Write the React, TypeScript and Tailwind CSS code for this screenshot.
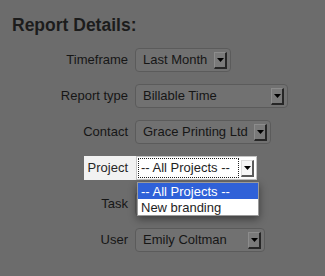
import React from "react";

const font = { fontFamily: '"Liberation Sans", Arial, sans-serif' };

function Arrow({ bright = false }: { bright?: boolean }) {
  return (
    <div
      className={
        bright
          ? "w-[13px] h-[17px] bg-[#f6f6f6] border-t border-l border-[#dcdcdc] border-r-2 border-b-2 border-r-[#5a5a5a] border-b-[#5a5a5a] flex items-center justify-center"
          : "w-[13px] h-[17px] bg-[#7a7a7a] border-t border-l border-[#8c8c8c] border-r-2 border-b-2 border-r-[#262626] border-b-[#262626] flex items-center justify-center"
      }
    >
      <svg width="7" height="4" viewBox="0 0 7 4">
        <path d="M0 0 H7 L3.5 4 Z" fill="#000" />
      </svg>
    </div>
  );
}

function Select({ text, w }: { text: string; w: string }) {
  return (
    <div
      className={`${w} h-[24px] rounded-[4px] border border-[#5b5b5b] bg-[#717171] flex items-center justify-between pl-[7px] pr-[3px] text-[13px] text-[#161616]`}
    >
      <span className="whitespace-nowrap">{text}</span>
      <Arrow />
    </div>
  );
}

function Row({ label, text, w }: { label: string; text: string; w: string }) {
  return (
    <div className="flex items-center h-[24px]">
      <div className="w-[128px] text-right text-[13px] text-[#161616] whitespace-nowrap">{label}</div>
      <div className="ml-[7px]">
        <Select text={text} w={w} />
      </div>
    </div>
  );
}

export default function App() {
  return (
    <div className="w-[325px] h-[276px] bg-[#6c6c6c] overflow-hidden relative" style={font}>
      <div className="pl-[12px] pt-[15px] text-[17.5px] font-bold text-[#1c1c1c] leading-[20px]">
        Report Details:
      </div>
      <div className="mt-[13px] flex flex-col gap-[12px]">
        <Row label="Timeframe" text="Last Month" w="w-[96px]" />
        <Row label="Report type" text="Billable Time" w="w-[153px]" />
        <Row label="Contact" text="Grace Printing Ltd" w="w-[136px]" />
        <div className="flex items-stretch h-[24px] relative">
          <div className="w-[136px] flex justify-end">
            <div className="w-[52px] bg-[#f2f2f2] flex items-center justify-end pr-[8px] text-[13px] text-[#262626]">
              Project
            </div>
          </div>
          <div className="w-[121px] bg-white border border-[#c4c4c4] flex items-center pl-[1px] pr-[2px]">
            <div className="flex-1 h-[20px] border border-dotted border-[#222] flex items-center pl-[2px] text-[13px] text-[#1e1e1e] whitespace-nowrap">
              -- All Projects --
            </div>
            <div className="ml-[2px]">
              <Arrow bright />
            </div>
          </div>
          <div className="absolute left-[137px] top-[26px] w-[122px] bg-white border border-[#9a9a9a] shadow-[0_3px_8px_rgba(0,0,0,0.45)] z-10 text-[13px] leading-[15px]">
            <div className="bg-[#2f61d8] text-white pl-[3px] h-[16px] flex items-center">-- All Projects --</div>
            <div className="text-[#1e1e1e] pl-[3px] h-[16px] flex items-center">New branding</div>
          </div>
        </div>
        <Row label="Task" text="" w="w-[122px]" />
        <Row label="User" text="Emily Coltman" w="w-[130px]" />
      </div>
    </div>
  );
}
